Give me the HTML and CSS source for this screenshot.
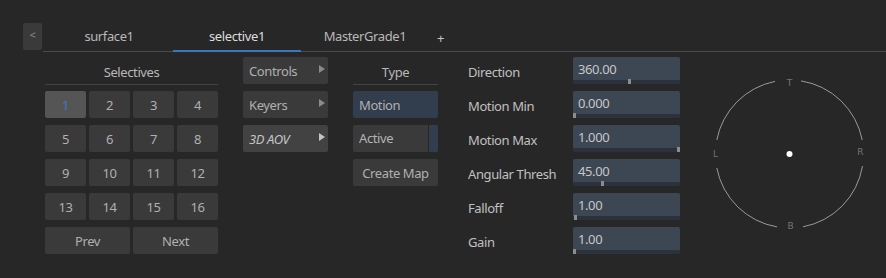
FILE: index.html
```html
<!DOCTYPE html>
<html lang="en">

<head>
     <meta charset="UTF-8" />
     <title>Selective</title>
     <link rel="stylesheet" href="styles.css">
</head>

<body>
     <div class="tabbar">
          <button class="back">&lt;</button>
          <div class="tabs">
               <div class="tab">surface1</div>
               <div class="tab active">selective1</div>
               <div class="tab">MasterGrade1</div>
               <div class="tab-add">+</div>
          </div>
     </div>

     <div class="main">
          <div class="selectives">
               <div class="col-head">Selectives</div>
               <div class="grid">
                    <button class="btn current">1</button>
                    <button class="btn">2</button>
                    <button class="btn">3</button>
                    <button class="btn">4</button>
                    <button class="btn">5</button>
                    <button class="btn">6</button>
                    <button class="btn">7</button>
                    <button class="btn">8</button>
                    <button class="btn">9</button>
                    <button class="btn">10</button>
                    <button class="btn">11</button>
                    <button class="btn">12</button>
                    <button class="btn">13</button>
                    <button class="btn">14</button>
                    <button class="btn">15</button>
                    <button class="btn">16</button>
                    <button class="btn wide">Prev</button>
                    <button class="btn wide">Next</button>
               </div>
          </div>

          <div class="menu">
               <button class="btn sub">Controls</button>
               <button class="btn sub">Keyers</button>
               <button class="btn sub open">3D AOV</button>
          </div>

          <div class="type">
               <div class="col-head">Type</div>
               <button class="btn left on">Motion</button>
               <div class="toggle">
                    <span>Active</span>
                    <span class="toggle-bar"></span>
               </div>
               <button class="btn">Create Map</button>
          </div>

          <div class="params">
               <div class="param">
                    <span class="label">Direction</span>
                    <div class="field">360.00<span class="handle" style="left: 51%"></span></div>
               </div>
               <div class="param">
                    <span class="label">Motion Min</span>
                    <div class="field">0.000<span class="handle" style="left: 0%"></span></div>
               </div>
               <div class="param">
                    <span class="label">Motion Max</span>
                    <div class="field">1.000<span class="handle" style="left: 97%"></span></div>
               </div>
               <div class="param">
                    <span class="label">Angular Thresh</span>
                    <div class="field">45.00<span class="handle" style="left: 26%"></span></div>
               </div>
               <div class="param">
                    <span class="label">Falloff</span>
                    <div class="field">1.00<span class="handle" style="left: 1%"></span></div>
               </div>
               <div class="param">
                    <span class="label">Gain</span>
                    <div class="field">1.00<span class="handle" style="left: 0%"></span></div>
               </div>
          </div>

          <div class="dial">
               <svg width="170" height="170" viewBox="0 0 170 170">
                    <g fill="none" stroke="#9a9a9a" stroke-width="1">
                         <path d="M 70 11.4 A 74 74 0 0 0 11.8 70" />
                         <path d="M 11.8 98 A 74 74 0 0 0 72 156.9" />
                         <path d="M 98 156.8 A 74 74 0 0 0 157.5 96" />
                         <path d="M 157.2 70 A 74 74 0 0 0 96 10.9" />
                    </g>
                    <g class="dial-text">
                         <text x="84.5" y="16">T</text>
                         <text x="85.5" y="159">B</text>
                         <text x="10.5" y="87">L</text>
                         <text x="155.5" y="85">R</text>
                    </g>
                    <circle cx="84.5" cy="84" r="3" fill="#ffffff" />
               </svg>
          </div>
     </div>
</body>

</html>
```

FILE: styles.css
```css
* {
     box-sizing: border-box;
     margin: 0;
     padding: 0;
}

body {
     font-family: "Noto Sans", sans-serif;
     font-size: 13px;
     letter-spacing: -0.4px;
     background: #272727;
     color: #b4b4b4;
     width: 886px;
     height: 278px;
     overflow: hidden;
}

button {
     font-family: inherit;
     font-size: 13px;
     letter-spacing: -0.4px;
     border: none;
     color: #b0b0b0;
}

.tabbar {
     display: flex;
     padding: 23px 0 0 23px;
}

.back {
     width: 19px;
     height: 27px;
     background: #3a3a3a;
     border-radius: 2px;
     color: #8a8a8a;
     font-size: 11px;
     padding-bottom: 4px;
}

.tabs {
     flex: 1;
     display: flex;
     height: 29px;
     margin-left: 1px;
     border-bottom: 1px solid #4a4a4a;
     padding-left: 2px;
}

.tab {
     width: 128px;
     text-align: center;
     line-height: 26px;
     color: #b8b8b8;
}

.tab.active {
     color: #dcdcdc;
     border-bottom: 2px solid #3b76c2;
     height: 29px;
}

.tab-add {
     margin-left: 8px;
     line-height: 30px;
     color: #c8c8c8;
}

.main {
     display: flex;
     padding: 5px 0 0 45px;
}

.col-head {
     height: 28px;
     line-height: 30px;
     text-align: center;
     border-bottom: 1px solid #444;
     margin-bottom: 6px;
     color: #b8b8b8;
}

.selectives {
     width: 173px;
}

.grid {
     display: grid;
     grid-template-columns: repeat(4, 41px);
     grid-auto-rows: 27px;
     column-gap: 3px;
     row-gap: 7px;
}

.btn {
     background: #3a3a3a;
     border-radius: 2px;
     height: 27px;
     padding: 0;
     text-align: center;
}

.btn.wide {
     grid-column: span 2;
}

.btn.current {
     background: #555555;
     color: #3f78c8;
}

.menu {
     width: 85px;
     margin-left: 25px;
     display: flex;
     flex-direction: column;
     gap: 7px;
}

.sub {
     position: relative;
     text-align: left;
     padding-left: 6px;
}

.sub::after {
     content: "";
     position: absolute;
     right: 3px;
     top: 8px;
     border-left: 6px solid #8a8a8a;
     border-top: 4px solid transparent;
     border-bottom: 4px solid transparent;
}

.sub.open {
     background: #424242;
     font-style: italic;
     color: #c4c4c4;
}

.sub.open::after {
     border-left-color: #c4c4c4;
}

.type {
     width: 85px;
     margin-left: 25px;
     display: flex;
     flex-direction: column;
}

.type .btn {
     margin-bottom: 7px;
}

.btn.left {
     text-align: left;
     padding-left: 6px;
}

.btn.on {
     background: #323d4d;
}

.toggle {
     display: flex;
     height: 27px;
     margin-bottom: 7px;
     background: #3a3a3a;
     border-radius: 2px;
     overflow: hidden;
}

.toggle span:first-child {
     flex: 1;
     line-height: 27px;
     padding-left: 6px;
}

.toggle-bar {
     width: 10px;
     background: #323d4d;
     border-left: 1px solid #262626;
}

.params {
     margin-left: 30px;
     display: flex;
     flex-direction: column;
     gap: 7px;
}

.param {
     display: flex;
     align-items: center;
     height: 27px;
}

.label {
     width: 105px;
     color: #c0c0c0;
     padding-top: 3px;
}

.field {
     position: relative;
     width: 107px;
     height: 27px;
     background: #3d4753;
     border-radius: 2px;
     padding: 3px 0 0 5px;
     color: #c6c6c6;
     border-bottom: 4px solid #2b323b;
}

.handle {
     position: absolute;
     bottom: -4px;
     width: 3px;
     height: 5px;
     background: #8c8c8c;
}

.dial {
     margin: 13px 0 0 25px;
}

.dial-text text {
     font-family: "DejaVu Sans", sans-serif;
     font-size: 9px;
     letter-spacing: 0;
     fill: #747474;
     text-anchor: middle;
}
```
